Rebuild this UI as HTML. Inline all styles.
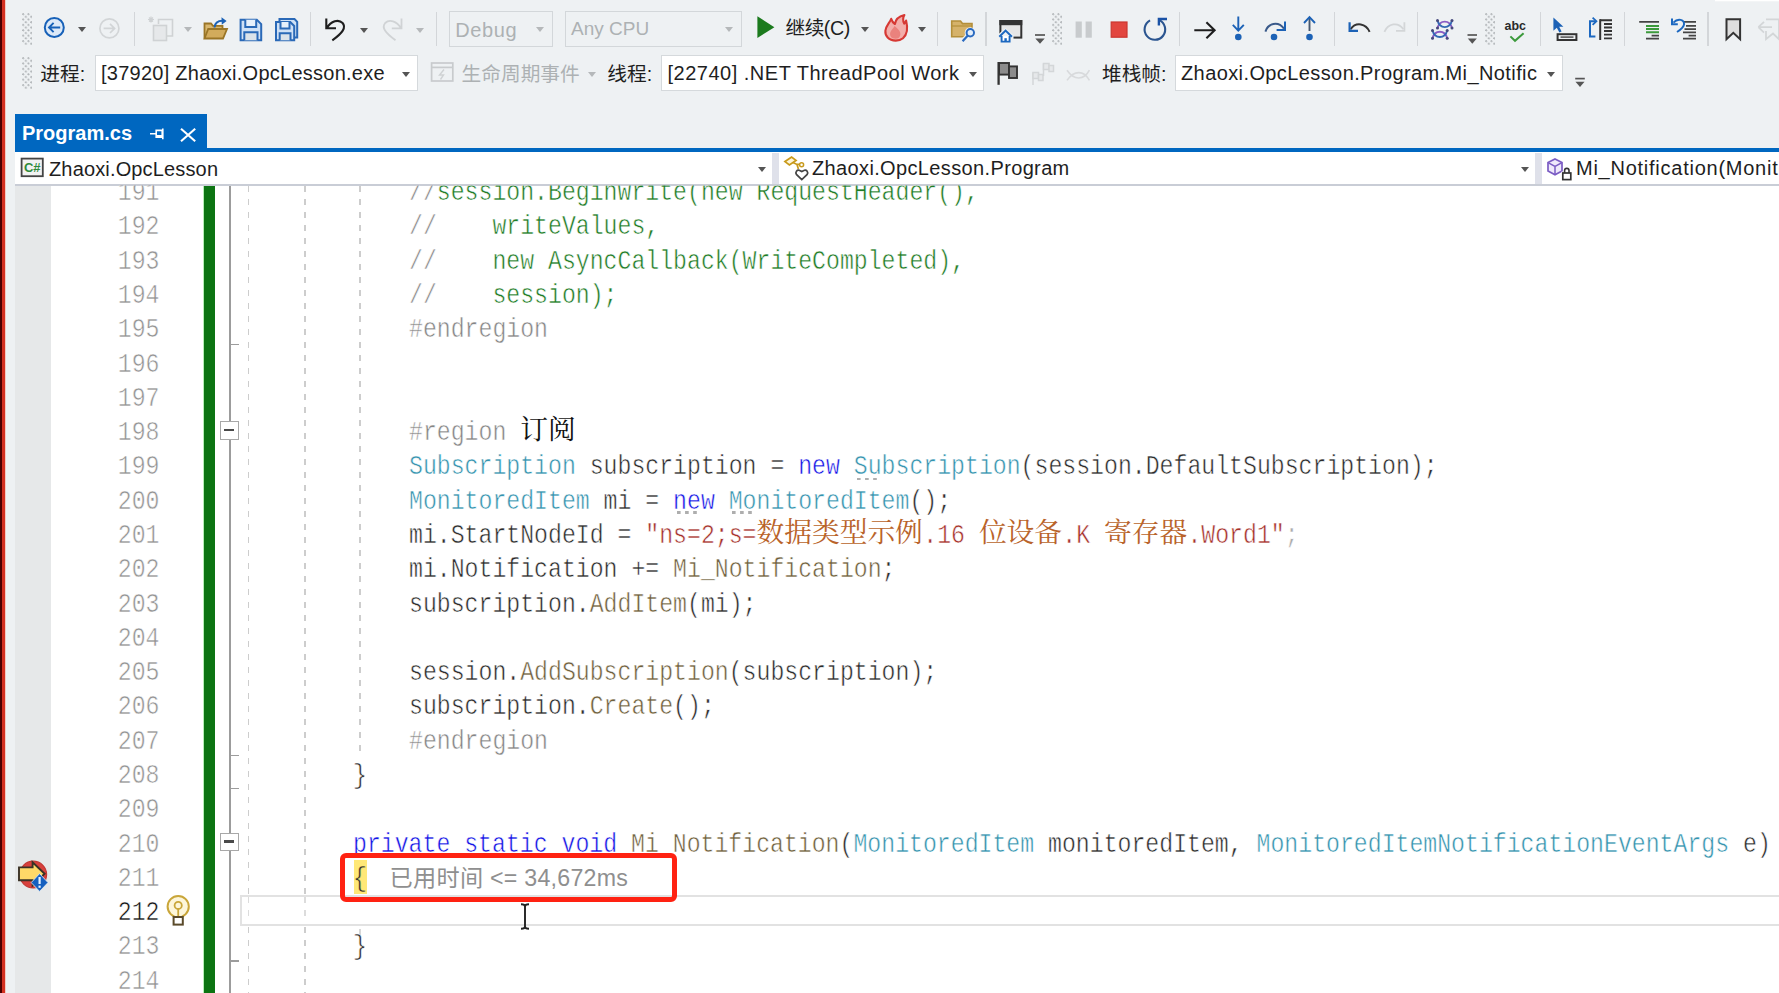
<!DOCTYPE html>
<html lang="zh-CN">
<head>
<meta charset="utf-8">
<title>Program.cs - Zhaoxi.OpcLesson</title>
<style>
html,body{margin:0;padding:0;}
body{width:1779px;height:993px;overflow:hidden;position:relative;background:#eef1f3;
  font-family:"Liberation Sans","Noto Sans CJK SC",sans-serif;color:#1e1e1e;}
.abs{position:absolute;}
#edge0{left:0;top:0;width:2px;height:993px;background:#4a0000;}
#edge1{left:1.5px;top:0;width:3.5px;height:993px;background:#d43020;}
#edge2{left:5px;top:0;width:1px;height:993px;background:#f3c9c2;}
/* toolbars */
.ui{position:absolute;white-space:nowrap;font-size:20px;line-height:24px;color:#1e1e1e;}
.ui.uc{font-size:19.7px;}
.dis{color:#adb1b3;}
.combo{position:absolute;background:#fff;border:1px solid #d5d9dc;box-sizing:border-box;}
.combo.disb{background:#eef1f3;border-color:#d3d7da;}
.sep{position:absolute;width:1.5px;background:#d3d6d9;top:12px;height:34px;}
.grip{position:absolute;width:9.5px;background:radial-gradient(circle at 1.2px 1.2px,#b3b7ba 0.85px,transparent 1.25px) 0 0/5.4px 5.4px,radial-gradient(circle at 1.2px 1.2px,#b3b7ba 0.85px,transparent 1.25px) 2.7px 2.7px/5.4px 5.4px;}
.dd{position:absolute;width:0;height:0;border-left:4.5px solid transparent;border-right:4.5px solid transparent;border-top:5px solid #555;}
.dd.g{border-top-color:#b5b8ba;}
svg{position:absolute;overflow:visible;}
/* tab */
#tab{left:14.5px;top:114px;width:192.5px;height:37px;background:#0067c0;}
#tabline{left:14.5px;top:148px;width:1765px;height:3.5px;background:#0067c0;}
#tabtxt{left:22px;top:121px;font-weight:bold;font-size:20px;line-height:24px;color:#fff;letter-spacing:0px;}
#nav{left:14.5px;top:151.5px;width:1765px;height:33.5px;background:#fff;}
#navshadow{left:14.5px;top:184px;width:1765px;height:2px;background:#c9cdd6;}
/* editor */
#editor{left:14.5px;top:185.5px;width:1765px;height:808px;background:#fff;overflow:hidden;}
#margin{left:14.5px;top:185.5px;width:36.5px;height:808px;background:#e6e8e9;}
#code{left:0;top:0;width:1779px;height:993px;clip-path:inset(185.5px 0 0 0);}
.ln{position:absolute;left:100px;width:59.5px;text-align:right;height:34.28px;line-height:34.28px;
  font-family:"Liberation Mono",monospace;font-size:28.5px;color:#939393;white-space:pre;
  transform:scaleX(0.8127);transform-origin:100% 50%;-webkit-text-stroke:0.55px #fff;}
.ln.cur{color:#111;}
.cl{position:absolute;height:34.28px;line-height:34.28px;font-family:"Liberation Mono",monospace;font-size:28.5px;
  white-space:pre;transform:scaleX(0.8127);transform-origin:0 50%;color:#222;-webkit-text-stroke:0.55px #fff;}
.cj{position:absolute;height:34.28px;line-height:34.28px;font-family:"Liberation Serif","Noto Serif CJK SC",serif;font-size:27.72px;white-space:pre;}
#greenbar{left:203.7px;top:185.5px;width:11px;height:808px;background:#0c7412;box-shadow:-1px 0 0 #b6f0b6;}
.oline{position:absolute;background:#9c9c9c;}
.guide{position:absolute;width:1.6px;background-image:linear-gradient(to bottom,#cdcdcd 0,#cdcdcd 6px,transparent 6px,transparent 13px);background-size:1.6px 13px;}
.obox{position:absolute;left:220.3px;width:18.8px;height:18.6px;box-sizing:border-box;border:1.6px solid #a8a8a8;background:#fff;}
.obox i{position:absolute;left:2.4px;top:6.4px;width:10.8px;height:2.6px;background:#4a4a4a;}
.dots{position:absolute;width:21px;height:2.2px;background-image:linear-gradient(to right,#aeaeae 0,#aeaeae 3.4px,transparent 3.4px);background-size:8.1px 2.2px;}
</style>
</head>
<body>
<div id="edge0" class="abs"></div><div id="edge1" class="abs"></div><div id="edge2" class="abs"></div>
<!-- row 1 -->
<div class="grip" style="left:22px;top:13px;height:32px"></div>
<div class="sep" style="left:133.5px"></div>
<div class="sep" style="left:309.5px"></div>
<div class="sep" style="left:435.5px"></div>
<div class="combo disb" style="left:449px;top:10.5px;width:104px;height:36.5px"></div>
<div class="ui dis" style="left:455.3px;top:17.6px;letter-spacing:0.6px">Debug</div>
<div class="dd g" style="left:536px;top:27px"></div>
<div class="combo disb" style="left:564.5px;top:10.5px;width:177px;height:36.5px"></div>
<div class="ui dis" style="left:571px;top:17px;font-size:19px">Any CPU</div>
<div class="dd g" style="left:725px;top:27px"></div>
<div class="ui uc" style="left:785.4px;top:16.3px;letter-spacing:-0.45px">继续(C)</div>
<div class="dd" style="left:860.5px;top:26.5px"></div>
<div class="dd" style="left:917.5px;top:26.5px"></div>
<div class="sep" style="left:936.5px"></div>
<div class="sep" style="left:985px"></div>
<div class="grip" style="left:1052px;top:13px;height:32px"></div>
<div class="sep" style="left:1178.5px"></div>
<div class="sep" style="left:1333.5px"></div>
<div class="sep" style="left:1416.5px"></div>
<div class="grip" style="left:1485px;top:13px;height:32px"></div>
<div class="sep" style="left:1539.5px"></div>
<div class="sep" style="left:1623.5px"></div>
<div class="sep" style="left:1707px"></div>
<div class="dd" style="left:78.2px;top:26.5px"></div>
<div class="dd g" style="left:183.5px;top:26.5px"></div>
<div class="dd" style="left:360.1px;top:27.5px"></div>
<div class="dd g" style="left:416.1px;top:27.5px"></div>
<!-- row 2 -->
<div class="grip" style="left:22px;top:57px;height:32px"></div>
<div class="ui uc" style="left:40.3px;top:62px">进程:</div>
<div class="combo" style="left:94.5px;top:54.5px;width:323px;height:36px"></div>
<div class="ui" style="left:101px;top:60.5px;letter-spacing:0.25px">[37920] Zhaoxi.OpcLesson.exe</div>
<div class="dd" style="left:401.5px;top:71.5px"></div>
<div class="ui uc dis" style="left:461.6px;top:61.8px">生命周期事件</div>
<div class="dd g" style="left:587.5px;top:71.5px"></div>
<div class="ui uc" style="left:607.3px;top:62px">线程:</div>
<div class="combo" style="left:661px;top:54.5px;width:323px;height:36px"></div>
<div class="ui" style="left:667.5px;top:60.5px;letter-spacing:0.5px">[22740] .NET ThreadPool Work</div>
<div class="dd" style="left:968.5px;top:71.5px"></div>
<div class="ui uc" style="left:1102px;top:62px">堆栈帧:</div>
<div class="combo" style="left:1175px;top:54.5px;width:388px;height:36px"></div>
<div class="ui" style="left:1181px;top:60.5px;letter-spacing:0.4px">Zhaoxi.OpcLesson.Program.Mi_Notific</div>
<div class="dd" style="left:1547px;top:71.5px"></div>
<svg class="abs" style="left:0;top:0" width="1779" height="100" viewBox="0 0 1779 100" fill="none" stroke-linecap="butt" stroke-linejoin="miter">
<!-- back -->
<circle cx="54.3" cy="27.5" r="9.5" fill="#dce9f8" stroke="#1761b8" stroke-width="2"/>
<path d="M49.2 27.5H60.2M53.6 22.9L49 27.5L53.6 32.1" stroke="#1761b8" stroke-width="1.9"/>
<!-- forward (disabled) -->
<circle cx="109.4" cy="28.4" r="9.5" stroke="#d2d5d7" stroke-width="1.7"/>
<path d="M103.6 28.4H114.4M110 23.8L114.6 28.4L110 33" stroke="#d2d5d7" stroke-width="1.7"/>
<!-- new item (disabled) -->
<g stroke="#cfd2d4" stroke-width="1.6">
<path d="M158.5 24V19.5H172.5V36H167"/>
<rect x="153.5" y="25.5" width="13" height="15" fill="#e6e8ea"/>
<path d="M151 16.5V22.5M148 19.5H154M149 17.5L153 21.5M153 17.5L149 21.5" stroke-width="1.2"/>
</g>
<!-- open folder -->
<path d="M204.5 38.5V23.5H211L213 25.8H222.5V29" stroke="#9a7526" stroke-width="1.8" fill="#d9b76e"/>
<path d="M204.5 38.5L208.2 29H227L223 38.5Z" fill="#d2ab5c" stroke="#9a7526" stroke-width="1.8"/>
<path d="M214.5 27.5C215 22.5 218.5 20.5 223.5 20.8" stroke="#1c62b6" stroke-width="2"/>
<path d="M221.5 17.2L226.6 20.9L221.8 24.8Z" fill="#1c62b6"/>
<!-- save -->
<path d="M240.6 19.7H256.8L261.2 24.1V40.3H240.6Z" fill="#cfe1f6" stroke="#2a69b7" stroke-width="2"/>
<path d="M245.3 19.7V27H256.2V19.7" stroke="#2a69b7" stroke-width="2" fill="#e6f0fb"/>
<path d="M244.3 40.3V32.3H257.5V40.3" stroke="#2a69b7" stroke-width="2" fill="#dbe3ea"/>
<!-- save all -->
<path d="M279.5 21V19H294.5L297.2 21.8V37.5H294.5" stroke="#2a69b7" stroke-width="2" fill="#cfe1f6"/>
<path d="M276 22H290.2L294.2 26V40.3H276Z" fill="#cfe1f6" stroke="#2a69b7" stroke-width="2"/>
<path d="M280.5 22V28.5H289.5V22" stroke="#2a69b7" stroke-width="2" fill="#e6f0fb"/>
<path d="M279.7 40.3V33.3H290.5V40.3" stroke="#2a69b7" stroke-width="2" fill="#dbe3ea"/>
<!-- undo -->
<path d="M326.3 18.5V28.3H336M327 27.8C331 21 338.5 18.8 342.6 23C346.5 27.5 342.5 33 332.3 40.3" stroke="#1e1e1e" stroke-width="2.1"/>
<!-- redo (disabled) -->
<path d="M401.5 18.5V28.3H391.8M400.8 27.8C396.8 21 389.3 18.8 385.2 23C381.3 27.5 385.3 33 395.5 40.3" stroke="#d0d3d5" stroke-width="1.8"/>
<!-- play -->
<path d="M757.4 16.3V38L774.4 27.2Z" fill="#1b7a1d"/>
<!-- flame -->
<path d="M895.8 40.6C888.5 40.6 884.9 35.8 885.4 30.6C885.9 25.8 889.6 23 891.2 18.8C892.2 21.6 893.3 23 894.9 24C895.4 20 898.8 16.4 904.4 15C902.4 18.4 902.8 20.8 904.2 23.6C905.2 22.7 905.7 21.7 906.1 20.6C908 28 907 34.8 903 38.2C901 39.9 898.5 40.6 895.8 40.6Z" fill="#f3aeaa" stroke="#d63934" stroke-width="2.1" stroke-linejoin="round"/>
<path d="M895.5 38.8C891.5 38.8 889.5 36 890.2 32.8C890.8 30 893.5 28.6 894.5 26C896.5 28 900.8 30.5 900.4 34.5C900.1 37.2 898.2 38.8 895.5 38.8Z" fill="#ea827d"/>
<!-- folder search -->
<path d="M951.7 36.8V21H960.5L962.5 23.6H972V36.8Z" fill="#d5b26a" stroke="#b48f3a" stroke-width="1.6"/>
<path d="M951.7 26H972" stroke="#b48f3a" stroke-width="1.2"/>
<circle cx="970.3" cy="32.8" r="5.6" fill="#eef1f3"/>
<path d="M967.6 36L962.3 41.6" stroke="#eef1f3" stroke-width="5"/>
<circle cx="970.3" cy="32.8" r="3.7" fill="#e3eefa" stroke="#2a6ac0" stroke-width="2"/>
<path d="M967.6 35.8L962.6 41.2" stroke="#2a6ac0" stroke-width="2.2"/>
<!-- window home -->
<rect x="1000.4" y="21" width="20.9" height="16.6" fill="#e6e6e6" stroke="#333" stroke-width="2"/>
<rect x="999.4" y="20" width="22.9" height="5.2" fill="#333"/>
<path d="M997.5 43.5V35L1005.6 28L1013.5 35V43.5Z" fill="#eef1f3"/>
<path d="M999.3 36.8L1005.6 30.6L1011.9 36.8" stroke="#1c68c0" stroke-width="2"/>
<path d="M1001.6 36V41.6H1009.6V36" stroke="#1c68c0" stroke-width="1.9" fill="#fff"/>
<rect x="1004.4" y="38.2" width="2.4" height="3.4" fill="#1c68c0"/>
<!-- overflow -->
<path d="M1035 35H1045" stroke="#555" stroke-width="1.7"/>
<path d="M1035.3 38.5H1044.7L1040 43.7Z" fill="#555"/>
<!-- pause -->
<rect x="1075.6" y="21.5" width="6.2" height="16.2" fill="#c8cbcd"/>
<rect x="1085.6" y="21.5" width="6.2" height="16.2" fill="#c8cbcd"/>
<!-- stop -->
<rect x="1111.2" y="22" width="15.8" height="15.2" fill="#e2463f" stroke="#cb3630" stroke-width="1.2"/>
<!-- restart -->
<path d="M1150.06 20.41A10.3 10.3 0 1 0 1159.25 20.17" stroke="#2b5590" stroke-width="2.1"/>
<path d="M1158.9 25.6V19H1167" stroke="#1a52a6" stroke-width="2.4"/>
<!-- show next statement -->
<path d="M1194.3 30.3H1214.3M1206.4 22.3L1214.6 30.3L1206.4 38.3" stroke="#1e1e1e" stroke-width="2.1"/>
<!-- step into -->
<path d="M1238.3 16.6V30.4M1232.8 24.8L1238.3 30.6L1243.8 24.8" stroke="#1c62b6" stroke-width="1.9"/>
<circle cx="1238.3" cy="37" r="3.3" fill="#1c62b6"/>
<!-- step over -->
<path d="M1265.4 31.6C1268 23.2 1278 20.6 1284 28.6" stroke="#3a5a8a" stroke-width="2"/>
<path d="M1285 21.4V30H1276.6" stroke="#1c62b6" stroke-width="2"/>
<circle cx="1274" cy="37" r="3.3" fill="#1c62b6"/>
<!-- step out -->
<path d="M1309.5 17.6V31" stroke="#46586e" stroke-width="1.9"/>
<path d="M1304 23L1309.5 17.2L1315 23" stroke="#1c62b6" stroke-width="1.9"/>
<circle cx="1309.5" cy="37" r="3.3" fill="#1c62b6"/>
<!-- step backward -->
<path d="M1369.6 31.8C1366 23.4 1356 21.4 1350.6 29.2" stroke="#333" stroke-width="2"/>
<path d="M1349.6 22.2V30.8H1358" stroke="#1c62b6" stroke-width="2.2"/>
<!-- step forward (disabled) -->
<path d="M1384.4 31.8C1388 23.4 1398 21.4 1403.4 29.2" stroke="#d3d6d8" stroke-width="1.8"/>
<path d="M1404.4 22.2V30.8H1396" stroke="#d3d6d8" stroke-width="1.8"/>
<!-- threads -->
<g stroke-width="1.9" stroke-linecap="round">
<path d="M1437.5 28.1C1439.8 19.4 1449.7 19.4 1452 28.1" stroke="#8a5cc4"/>
<path d="M1437.5 20.6C1439.8 29.3 1449.7 29.3 1452 20.6" stroke="#3468b4"/>
<path d="M1432.5 38.3C1434.8 29.6 1444.9 29.6 1447.2 38.3" stroke="#8a5cc4"/>
<path d="M1432.5 30.5C1434.8 39.2 1444.9 39.2 1447.2 30.5" stroke="#3468b4"/>
</g>
<g fill="#474a7c"><circle cx="1437.5" cy="20.6" r="1.5"/><circle cx="1437.5" cy="28.1" r="1.5"/><circle cx="1452" cy="20.6" r="1.5"/><circle cx="1452" cy="28.1" r="1.5"/><circle cx="1432.5" cy="30.5" r="1.5"/><circle cx="1432.5" cy="38.3" r="1.5"/><circle cx="1447.2" cy="30.5" r="1.5"/><circle cx="1447.2" cy="38.3" r="1.5"/></g>
<!-- overflow 2 -->
<path d="M1467.5 35H1477" stroke="#555" stroke-width="1.7"/>
<path d="M1467.8 38.5H1476.8L1472.3 43.7Z" fill="#555"/>
<!-- abc check -->
<text x="1504.6" y="30" font-family="Liberation Sans, sans-serif" font-weight="bold" font-size="12.5" fill="#2a2a2a" stroke="none" textLength="21.4" lengthAdjust="spacingAndGlyphs">abc</text>
<path d="M1510.4 36.4L1515 40.8L1523.6 33.2" stroke="#3c9a3c" stroke-width="2"/>
<!-- cursor / rect -->
<path d="M1553.4 17.4V30.8L1556.8 27.8L1559.4 32.6L1561.6 31.4L1559.2 26.8H1563.4Z" fill="#1c62b6"/>
<rect x="1557.6" y="34.2" width="18.8" height="5.8" stroke="#333" stroke-width="2"/>
<path d="M1560.5 37.1H1573.5" stroke="#444" stroke-width="1.4"/>
<!-- bracket lines -->
<path d="M1595 21.2H1590V36.6H1595.4" stroke="#1c68c0" stroke-width="2"/>
<path d="M1592.6 17.6L1596.4 21.2L1592.6 24.8" stroke="#1c68c0" stroke-width="1.8"/>
<path d="M1600.2 19.2V40" stroke="#333" stroke-width="2"/>
<path d="M1600 20.2H1612M1604 24H1612M1604 27.5H1612M1604 31H1612M1604 34.6H1612M1604 38.4H1612" stroke="#333" stroke-width="1.9"/>
<!-- comment -->
<path d="M1639.2 21.9H1659M1651.6 35.6H1659M1646 38.7H1659" stroke="#444" stroke-width="1.8"/>
<path d="M1646 25.9H1659M1646 29.1H1659M1646 32.3H1659" stroke="#3c9a3c" stroke-width="2"/>
<!-- uncomment -->
<path d="M1683 21.9H1696M1686 25.9H1696M1684.5 29.1H1696M1683 32.3H1696M1688.6 35.6H1696M1683 38.7H1696" stroke="#444" stroke-width="1.8"/>
<path d="M1673.4 22.6C1678 17.6 1684.6 19.6 1684 24.6C1683.6 27.6 1680.6 29.6 1677 32" stroke="#1c68c0" stroke-width="2"/>
<path d="M1672 18.6V24.2H1677.8" stroke="#1c68c0" stroke-width="2"/>
<!-- bookmark -->
<path d="M1726.5 19.3H1740.1V39.2L1733.3 32.8L1726.5 39.2Z" fill="#dedede" stroke="#333" stroke-width="2"/>
<!-- prev bookmark (disabled) -->
<path d="M1766 19.3H1779V39.2L1773 33.5L1766 39.2V31" stroke="#d3d6d8" stroke-width="1.8"/>
<path d="M1758.4 27.2L1764 21.8M1758.4 27.2L1764 32.6M1758.4 27.2H1772" stroke="#d3d6d8" stroke-width="1.8"/>
<!-- row 2: lifecycle (disabled) -->
<rect x="431.6" y="63" width="21.2" height="18" stroke="#c8cbcd" stroke-width="1.7"/>
<path d="M431.6 67.4H452.8" stroke="#c8cbcd" stroke-width="1.7"/>
<path d="M444 69.5L439.5 75H443.5L440.5 79.5" stroke="#cfd2d4" stroke-width="1.4"/>
<!-- flag -->
<rect x="999" y="63" width="10" height="11.6" fill="#8c8c8c" stroke="#333" stroke-width="1.9"/>
<rect x="1009" y="66.4" width="8" height="11.6" fill="#8c8c8c" stroke="#333" stroke-width="1.9"/>
<path d="M998.6 62V84.8" stroke="#333" stroke-width="2.3"/>
<!-- flags disabled -->
<g stroke="#d3d6d8" stroke-width="1.5" fill="#e6e8ea">
<path d="M1033 85V72.5"/><rect x="1033" y="72.5" width="5.5" height="6"/><rect x="1038.5" y="74.5" width="4.5" height="6"/>
<path d="M1043.5 76V63.5"/><rect x="1043.5" y="63.5" width="5.5" height="6"/><rect x="1049" y="65.5" width="4.5" height="6"/>
</g>
<!-- fish disabled -->
<path d="M1067 70.2C1074 80.5 1084 80.5 1089.4 70.2M1067 80.4C1074 70 1084 70 1089.4 80.4" stroke="#d8dadc" stroke-width="1.6"/>
<!-- overflow row2 -->
<path d="M1575.2 78.6H1584.8" stroke="#555" stroke-width="1.7"/>
<path d="M1575.5 81.8H1584.5L1580 87Z" fill="#555"/>
<!-- top-right white sliver -->
<rect x="1715" y="0" width="64" height="1.3" fill="#fff"/>
</svg>

<div id="tab" class="abs"></div>
<div id="tabline" class="abs"></div>
<div id="tabtxt" class="abs">Program.cs</div>
<div id="nav" class="abs"></div>
<div class="ui" style="left:49px;top:156.5px;letter-spacing:0.15px">Zhaoxi.OpcLesson</div>
<div class="dd" style="left:757.8px;top:167.3px"></div>
<div class="abs" style="left:771.6px;top:152.5px;width:7px;height:31.5px;background:#dfe1ea"></div>
<div class="ui" style="left:812px;top:155.8px;letter-spacing:0.36px">Zhaoxi.OpcLesson.Program</div>
<div class="dd" style="left:1521.4px;top:167.3px"></div>
<div class="abs" style="left:1534.6px;top:152.5px;width:7px;height:31.5px;background:#dfe1ea"></div>
<div class="ui" style="left:1576px;top:156px;letter-spacing:0.75px">Mi_Notification(MonitoredItem monitoredItem, MonitoredItemNotificationEventArgs e)</div>
<svg class="abs" style="left:0;top:100px" width="1779" height="100" viewBox="0 100 1779 100" fill="none">
<!-- pin -->
<path d="M150 133.8H156.2M156.2 130.4H162.2V137.2H156.2ZM162.8 128.6V139.2M156.2 135.8H162" stroke="#fff" stroke-width="1.6"/>
<!-- close -->
<path d="M181 128.8L195.2 141.2M195.2 128.8L181 141.2" stroke="#fff" stroke-width="2.1"/>
<!-- C# icon -->
<rect x="21.6" y="158.6" width="21.2" height="17.6" fill="#f2f2f2" stroke="#444" stroke-width="1.8"/>
<text x="24" y="172.4" font-family="Liberation Sans, sans-serif" font-weight="bold" font-size="12.5" fill="#2e8b3a" textLength="16.6" lengthAdjust="spacingAndGlyphs">C#</text>
<!-- class icon -->
<path d="M785 161.6L791.6 157L796 160.4L789.4 165Z" stroke="#c89a1c" stroke-width="1.8" fill="#fff6d8"/>
<path d="M793 162.4L797 164.4H802.6M797 164.4L798.4 169" stroke="#c89a1c" stroke-width="1.7"/>
<circle cx="801.6" cy="164.8" r="2" stroke="#c89a1c" stroke-width="1.5" fill="#fff"/>
<path d="M801.8 179.6L796.4 174.4C795 172 797 169.6 799.2 170.2L801.8 171.6L804.4 170.2C806.6 169.6 808.6 172 807.2 174.4Z" fill="#fff" stroke="#444" stroke-width="1.7"/>
<!-- cube + lock -->
<path d="M1555 159L1562 162.6V171L1555 174.8L1548 171V162.6Z" fill="#efe9fb" stroke="#7b5cc4" stroke-width="1.7"/>
<path d="M1548 162.6L1555 166.4L1562 162.6M1555 166.4V174.8" stroke="#7b5cc4" stroke-width="1.5"/>
<rect x="1561.4" y="171.6" width="10.6" height="9.2" fill="#fff"/>
<rect x="1562.8" y="173" width="8" height="6.6" fill="#fff" stroke="#333" stroke-width="1.7"/>
<path d="M1564.6 173V170.6C1564.6 167.6 1569 167.6 1569 170.6V173" stroke="#333" stroke-width="1.6"/>
</svg>

<div id="editor" class="abs"></div>
<div id="margin" class="abs"></div>
<div id="navshadow" class="abs"></div>
<div id="greenbar" class="abs"></div>
<!-- indent guides -->
<div class="guide" style="left:247.5px;top:185.5px;height:808px"></div>
<div class="guide" style="left:304.2px;top:185.5px;height:808px"></div>
<div class="guide" style="left:359.3px;top:185.5px;height:571px"></div>
<div class="guide" style="left:359.3px;top:903px;height:34px;opacity:.8"></div>
<!-- outlining -->
<div class="oline" style="left:229.4px;top:185.5px;width:2px;height:808px"></div>
<div class="oline" style="left:230.5px;top:343.6px;width:8.6px;height:1.7px"></div>
<div class="oline" style="left:230.5px;top:754.5px;width:8.6px;height:1.7px"></div>
<div class="oline" style="left:230.5px;top:787.8px;width:8.6px;height:1.7px"></div>
<div class="oline" style="left:230.5px;top:960.4px;width:8.6px;height:1.7px"></div>
<div class="obox" style="top:421.2px"><i></i></div>
<div class="obox" style="top:832.9px"><i></i></div>
<!-- current line box -->
<div class="abs" style="left:240px;top:894.6px;width:1545px;height:31px;border:2px solid #e2e2e2;box-sizing:border-box;background:#fff"></div>
<div class="guide" style="left:247.5px;top:897px;height:26px;opacity:.7"></div>
<div class="guide" style="left:304.2px;top:897px;height:26px;opacity:.7"></div>
<!-- suggestion dots -->
<div class="dots" style="left:857px;top:477.8px"></div>
<div class="dots" style="left:677.2px;top:511.4px"></div>
<div class="dots" style="left:731.8px;top:511.4px"></div>
<!-- current statement highlight -->
<div class="abs" style="left:353.6px;top:860.2px;width:13.6px;height:33.4px;background:#ffe877"></div>

<div id="code" class="abs">
<div class="ln" style="top:176.18px">191</div>
<div class="cl" style="top:176.18px;left:409.00px"><span style="color:#858585">//</span><span style="color:#1f7c26">session.BeginWrite(new RequestHeader(),</span></div>
<div class="ln" style="top:210.46px">192</div>
<div class="cl" style="top:210.46px;left:409.00px"><span style="color:#858585">//</span><span style="color:#1f7c26">    writeValues,</span></div>
<div class="ln" style="top:244.74px">193</div>
<div class="cl" style="top:244.74px;left:409.00px"><span style="color:#858585">//</span><span style="color:#1f7c26">    new AsyncCallback(WriteCompleted),</span></div>
<div class="ln" style="top:279.02px">194</div>
<div class="cl" style="top:279.02px;left:409.00px"><span style="color:#858585">//</span><span style="color:#1f7c26">    session);</span></div>
<div class="ln" style="top:313.30px">195</div>
<div class="cl" style="top:313.30px;left:409.00px"><span style="color:#858585">#endregion</span></div>
<div class="ln" style="top:347.58px">196</div>
<div class="ln" style="top:381.86px">197</div>
<div class="ln" style="top:416.14px">198</div>
<div class="cl" style="top:416.14px;left:409.00px"><span style="color:#858585">#region </span><span>    </span></div>
<div class="cj" style="top:413.34px;left:520.20px;color:#111">订阅</div>
<div class="ln" style="top:450.42px">199</div>
<div class="cl" style="top:450.42px;left:409.00px"><span style="color:#3593ae">Subscription</span><span style="color:#2b2b2b"> subscription = </span><span style="color:#1414e6">new</span><span style="color:#2b2b2b"> </span><span style="color:#3593ae">Subscription</span><span style="color:#2b2b2b">(session.DefaultSubscription);</span></div>
<div class="ln" style="top:484.70px">200</div>
<div class="cl" style="top:484.70px;left:409.00px"><span style="color:#3593ae">MonitoredItem</span><span style="color:#2b2b2b"> mi = </span><span style="color:#1414e6">new</span><span style="color:#2b2b2b"> </span><span style="color:#3593ae">MonitoredItem</span><span style="color:#2b2b2b">();</span></div>
<div class="ln" style="top:518.98px">201</div>
<div class="cl" style="top:518.98px;left:409.00px"><span style="color:#2b2b2b">mi.StartNodeId = </span><span style="color:#a5302a">"ns=2;s=</span><span>            </span><span style="color:#a5302a">.16 </span><span>      </span><span style="color:#a5302a">.K </span><span>      </span><span style="color:#a5302a">.Word1"</span><span style="color:#aaa">;</span></div>
<div class="cj" style="top:516.18px;left:756.50px;color:#b9632a">数据类型示例</div>
<div class="cj" style="top:516.18px;left:978.90px;color:#b9632a">位设备</div>
<div class="cj" style="top:516.18px;left:1104.00px;color:#b9632a">寄存器</div>
<div class="ln" style="top:553.26px">202</div>
<div class="cl" style="top:553.26px;left:409.00px"><span style="color:#2b2b2b">mi.Notification += </span><span style="color:#6f5f3c">Mi_Notification</span><span style="color:#2b2b2b">;</span></div>
<div class="ln" style="top:587.54px">203</div>
<div class="cl" style="top:587.54px;left:409.00px"><span style="color:#2b2b2b">subscription.</span><span style="color:#6f5f3c">AddItem</span><span style="color:#2b2b2b">(mi);</span></div>
<div class="ln" style="top:621.82px">204</div>
<div class="ln" style="top:656.10px">205</div>
<div class="cl" style="top:656.10px;left:409.00px"><span style="color:#2b2b2b">session.</span><span style="color:#6f5f3c">AddSubscription</span><span style="color:#2b2b2b">(subscription);</span></div>
<div class="ln" style="top:690.38px">206</div>
<div class="cl" style="top:690.38px;left:409.00px"><span style="color:#2b2b2b">subscription.</span><span style="color:#6f5f3c">Create</span><span style="color:#2b2b2b">();</span></div>
<div class="ln" style="top:724.66px">207</div>
<div class="cl" style="top:724.66px;left:409.00px"><span style="color:#858585">#endregion</span></div>
<div class="ln" style="top:758.94px">208</div>
<div class="cl" style="top:758.94px;left:353.40px"><span style="color:#2b2b2b">}</span></div>
<div class="ln" style="top:793.22px">209</div>
<div class="ln" style="top:827.50px">210</div>
<div class="cl" style="top:827.50px;left:353.40px"><span style="color:#1414e6">private</span><span style="color:#2b2b2b"> </span><span style="color:#1414e6">static</span><span style="color:#2b2b2b"> </span><span style="color:#1414e6">void</span><span style="color:#2b2b2b"> </span><span style="color:#6f5f3c">Mi_Notification</span><span style="color:#2b2b2b">(</span><span style="color:#3593ae">MonitoredItem</span><span style="color:#2b2b2b"> monitoredItem, </span><span style="color:#3593ae">MonitoredItemNotificationEventArgs</span><span style="color:#2b2b2b"> e)</span></div>
<div class="ln" style="top:861.78px">211</div>
<div class="cl" style="top:861.78px;left:353.40px;-webkit-text-stroke-color:#ffe877"><span style="color:#2b2b2b">{</span></div>
<div class="ln cur" style="top:896.06px">212</div>
<div class="ln" style="top:930.34px">213</div>
<div class="cl" style="top:930.34px;left:353.40px"><span style="color:#2b2b2b">}</span></div>
<div class="ln" style="top:964.62px">214</div>
</div>
<!-- inline perf tip -->
<div class="abs" style="left:389.6px;top:863.1px;font-size:23.2px;line-height:30px;color:#8f8f8f;white-space:nowrap;letter-spacing:0.25px">已用时间 &lt;= 34,672ms</div>
<!-- red annotation box -->
<div class="abs" style="left:339.6px;top:853.3px;width:337.2px;height:49.2px;box-sizing:border-box;border:5.6px solid #ff2212;border-radius:6px"></div>
<svg class="abs" style="left:0;top:840px" width="1779" height="153" viewBox="0 840 1779 153" fill="none">
<!-- breakpoint + current statement arrow -->
<circle cx="33.2" cy="874.6" r="13.4" fill="#d8403c"/>
<circle cx="33.2" cy="874.6" r="13.4" stroke="#c23632" stroke-width="1.2"/>
<path d="M19 867.4H32.6V862.2L44.6 873.8L32.6 885.4V880.2H19Z" fill="#ffd968" stroke="#3a3226" stroke-width="1.9" stroke-linejoin="miter"/>
<path d="M39.6 873.6L48 882.6L39.6 891.4L31.2 882.6Z" fill="#1560c0" stroke="#eef1f3" stroke-width="0.8"/>
<path d="M39.6 877V884" stroke="#e8f2ff" stroke-width="2.2"/>
<rect x="38.5" y="885.6" width="2.2" height="2.2" fill="#e8f2ff"/>
<!-- light bulb -->
<circle cx="178.2" cy="906.6" r="10.6" fill="#fdf6da" stroke="#c9a63a" stroke-width="2"/>
<circle cx="178.2" cy="905.4" r="3.6" stroke="#c9a63a" stroke-width="1.8"/>
<path d="M178.2 909V917" stroke="#c9a63a" stroke-width="1.8"/>
<rect x="173.6" y="917" width="9.2" height="7.6" fill="#fff" stroke="#5a4a2a" stroke-width="2"/>
<!-- I-beam cursor -->
<path d="M521 904.2C523.5 904.2 525 904.8 525 906.5V926.5C525 928.2 523.5 928.8 521 928.8M529 904.2C526.5 904.2 525 904.8 525 906.5M525 926.5C525 928.2 526.5 928.8 529 928.8" stroke="#222" stroke-width="1.9"/>
</svg>

</body>
</html>
